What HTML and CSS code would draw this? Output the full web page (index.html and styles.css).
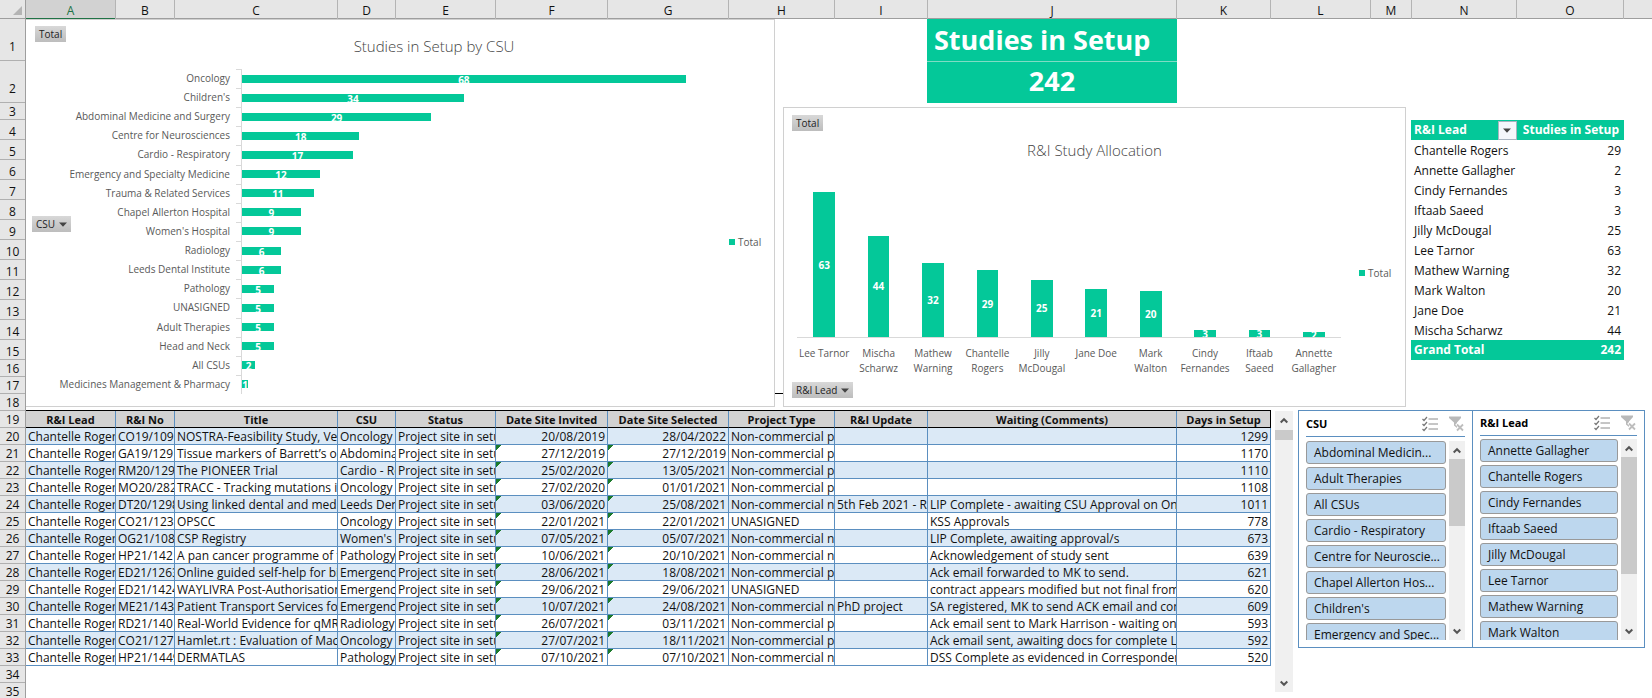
FILE: index.html
```html
<!DOCTYPE html>
<html lang="en">
<head>
<meta charset="utf-8">
<meta name="viewport" content="width=device-width, initial-scale=1">
<title>Studies in Setup</title>
<link rel="stylesheet" href="styles.css">
</head>
<body>
<svg class="defs" aria-hidden="true">
  <symbol id="multi" viewBox="0 0 16 15"><path d="M6.500 2.500H16M6.500 7.500H16M6.500 12.500H16" stroke="#8c8c8c" fill="none"/><path d="M.5 2.500l1.500 1.500L5 .5M.5 7.500L2 9l3-3.500M.5 12.500L2 14l3-3.500" stroke="#777" stroke-width="1.200" fill="none"/></symbol>
  <symbol id="clear" viewBox="0 0 16 16"><path d="M0 .5h12v1.500L8 6.500V12l-3-2.500v-3L0 2z" fill="#b9b9b9"/><path d="M7.500 7.500l7 7M14.500 7.500l-7 7" stroke="#fff" stroke-width="3.500"/><path d="M8 8.500l6 6M14 8.500l-6 6" stroke="#bdbdbd" stroke-width="1.800"/></symbol>
  <symbol id="up" viewBox="0 0 8 7"><path d="M.7 5.500L4 2.200l3.300 3.300" fill="none" stroke="#555" stroke-width="2"/></symbol>
  <symbol id="down" viewBox="0 0 8 7"><path d="M.7 1.500L4 4.800l3.300-3.300" fill="none" stroke="#555" stroke-width="2"/></symbol>
  <symbol id="tri" viewBox="0 0 8 5"><path d="M0 .5h8L4 4.800z" fill="#444"/></symbol>
</svg>

<div class="book">
  <div class="colheads">
    <span class="corner"><svg class="corner-mark" viewBox="0 0 9 9"><path d="M9 0v9H0z" fill="#b4b4b4"/></svg></span>
    <span class="sel">A</span><span>B</span><span>C</span><span>D</span><span>E</span><span>F</span><span>G</span><span>H</span><span>I</span><span>J</span><span>K</span><span>L</span><span>M</span><span>N</span><span>O</span><span class="rest"></span>
  </div>

  <div class="rownums">
    <span class="tall">1</span><span class="tall">2</span><span>3</span><span class="mid">4</span><span class="mid">5</span><span class="mid">6</span><span class="mid">7</span><span class="mid">8</span><span class="mid">9</span><span class="mid">10</span><span class="mid">11</span><span class="mid">12</span><span class="mid">13</span><span class="mid">14</span><span class="mid">15</span><span>16</span><span>17</span><span>18</span><span>19</span><span>20</span><span>21</span><span>22</span><span>23</span><span>24</span><span>25</span><span>26</span><span>27</span><span>28</span><span>29</span><span>30</span><span>31</span><span>32</span><span>33</span><span>34</span><span>35</span>
  </div>

  <main class="sheet">
    <div class="top">
      <section class="chart csu">
        <button class="field f-total">Total</button>
        <h2>Studies in Setup by CSU</h2>
        <div class="hplot">
          <ul class="hbars">
            <li><span class="name">Oncology</span><span class="track"><b style="width:97.1%">68</b></span></li>
            <li><span class="name">Children's</span><span class="track"><b style="width:48.6%">34</b></span></li>
            <li><span class="name">Abdominal Medicine and Surgery</span><span class="track"><b style="width:41.4%">29</b></span></li>
            <li><span class="name">Centre for Neurosciences</span><span class="track"><b style="width:25.7%">18</b></span></li>
            <li><span class="name">Cardio - Respiratory</span><span class="track"><b style="width:24.3%">17</b></span></li>
            <li><span class="name">Emergency and Specialty Medicine</span><span class="track"><b style="width:17.1%">12</b></span></li>
            <li><span class="name">Trauma &amp; Related Services</span><span class="track"><b style="width:15.7%">11</b></span></li>
            <li><span class="name">Chapel Allerton Hospital</span><span class="track"><b style="width:12.9%">9</b></span></li>
            <li><span class="name">Women's Hospital</span><span class="track"><b style="width:12.9%">9</b></span></li>
            <li><span class="name">Radiology</span><span class="track"><b style="width:8.6%">6</b></span></li>
            <li><span class="name">Leeds Dental Institute</span><span class="track"><b style="width:8.6%">6</b></span></li>
            <li><span class="name">Pathology</span><span class="track"><b style="width:7.1%">5</b></span></li>
            <li><span class="name">UNASIGNED</span><span class="track"><b style="width:7.1%">5</b></span></li>
            <li><span class="name">Adult Therapies</span><span class="track"><b style="width:7.1%">5</b></span></li>
            <li><span class="name">Head and Neck</span><span class="track"><b style="width:7.1%">5</b></span></li>
            <li><span class="name">All CSUs</span><span class="track"><b style="width:2.9%">2</b></span></li>
            <li><span class="name">Medicines Management &amp; Pharmacy</span><span class="track"><b style="width:1.4%">1</b></span></li>
          </ul>
          <div class="legend">Total</div>
        </div>
        <button class="field f-csu">CSU <svg class="tri"><use href="#tri"/></svg></button>
      </section>

      <div class="seam"></div>

      <div class="kpi"><strong>Studies in Setup</strong><strong class="num">242</strong></div>

      <section class="chart alloc">
        <button class="field f-total">Total</button>
        <h2>R&amp;I Study Allocation</h2>
        <div class="vplot">
          <ul class="vbars">
            <li><span class="col"><b style="height:90%">63</b></span><span class="name">Lee Tarnor</span></li>
            <li><span class="col"><b style="height:62.9%">44</b></span><span class="name">Mischa Scharwz</span></li>
            <li><span class="col"><b style="height:45.7%">32</b></span><span class="name">Mathew Warning</span></li>
            <li><span class="col"><b style="height:41.4%">29</b></span><span class="name">Chantelle Rogers</span></li>
            <li><span class="col"><b style="height:35.7%">25</b></span><span class="name">Jilly McDougal</span></li>
            <li><span class="col"><b style="height:30%">21</b></span><span class="name">Jane Doe</span></li>
            <li><span class="col"><b style="height:28.6%">20</b></span><span class="name">Mark Walton</span></li>
            <li><span class="col"><b style="height:4.3%">3</b></span><span class="name">Cindy Fernandes</span></li>
            <li><span class="col"><b style="height:4.3%">3</b></span><span class="name">Iftaab Saeed</span></li>
            <li><span class="col"><b style="height:2.9%">2</b></span><span class="name">Annette Gallagher</span></li>
          </ul>
          <div class="legend">Total</div>
        </div>
        <button class="field f-lead">R&amp;I Lead <svg class="tri"><use href="#tri"/></svg></button>
      </section>

      <table class="pivot">
        <thead><tr><th><span class="pv-head">R&amp;I Lead<button class="drop" aria-label="Filter R&amp;I Lead"><svg class="tri"><use href="#tri"/></svg></button></span></th><th class="n">Studies in Setup</th></tr></thead>
        <tbody>
          <tr><td>Chantelle Rogers</td><td class="n">29</td></tr>
          <tr><td>Annette Gallagher</td><td class="n">2</td></tr>
          <tr><td>Cindy Fernandes</td><td class="n">3</td></tr>
          <tr><td>Iftaab Saeed</td><td class="n">3</td></tr>
          <tr><td>Jilly McDougal</td><td class="n">25</td></tr>
          <tr><td>Lee Tarnor</td><td class="n">63</td></tr>
          <tr><td>Mathew Warning</td><td class="n">32</td></tr>
          <tr><td>Mark Walton</td><td class="n">20</td></tr>
          <tr><td>Jane Doe</td><td class="n">21</td></tr>
          <tr><td>Mischa Scharwz</td><td class="n">44</td></tr>
        </tbody>
        <tfoot><tr><th>Grand Total</th><th class="n">242</th></tr></tfoot>
      </table>
    </div>

    <div class="bottom">
      <table class="data">
        <colgroup><col class="wa"><col class="wb"><col class="wc"><col class="wd"><col class="we"><col class="wf"><col class="wg"><col class="wh"><col class="wi"><col class="wj"><col class="wk"></colgroup>
        <thead><tr><th>R&amp;I Lead</th><th>R&amp;I No</th><th>Title</th><th>CSU</th><th>Status</th><th>Date Site Invited</th><th>Date Site Selected</th><th>Project Type</th><th>R&amp;I Update</th><th>Waiting (Comments)</th><th>Days in Setup</th></tr></thead>
        <tbody>
          <tr><td>Chantelle Rogers</td><td>CO19/109</td><td>NOSTRA-Feasibility Study, Ver</td><td>Oncology</td><td>Project site in setup</td><td class="n">20/08/2019</td><td class="n">28/04/2022</td><td>Non-commercial po</td><td></td><td></td><td class="n">1299</td></tr>
          <tr><td>Chantelle Rogers</td><td>GA19/129</td><td>Tissue markers of Barrett’s oe</td><td>Abdomina</td><td>Project site in setup</td><td class="n flag">27/12/2019</td><td class="n flag">27/12/2019</td><td>Non-commercial po</td><td></td><td></td><td class="n">1170</td></tr>
          <tr><td>Chantelle Rogers</td><td>RM20/129</td><td>The PIONEER Trial</td><td>Cardio - Re</td><td>Project site in setup</td><td class="n flag">25/02/2020</td><td class="n flag">13/05/2021</td><td>Non-commercial po</td><td></td><td></td><td class="n">1110</td></tr>
          <tr><td>Chantelle Rogers</td><td>MO20/282</td><td>TRACC - Tracking mutations in</td><td>Oncology</td><td>Project site in setup</td><td class="n flag">27/02/2020</td><td class="n flag">01/01/2021</td><td>Non-commercial po</td><td></td><td></td><td class="n">1108</td></tr>
          <tr><td>Chantelle Rogers</td><td>DT20/1298</td><td>Using linked dental and medi</td><td>Leeds Dent</td><td>Project site in setup</td><td class="n flag">03/06/2020</td><td class="n flag">25/08/2021</td><td>Non-commercial no</td><td>5th Feb 2021 - Re</td><td>LIP Complete - awaiting CSU Approval on One</td><td class="n">1011</td></tr>
          <tr><td>Chantelle Rogers</td><td>CO21/123</td><td>OPSCC</td><td>Oncology</td><td>Project site in setup</td><td class="n flag">22/01/2021</td><td class="n flag">22/01/2021</td><td>UNASIGNED</td><td></td><td>KSS Approvals</td><td class="n">778</td></tr>
          <tr><td>Chantelle Rogers</td><td>OG21/108</td><td>CSP Registry</td><td>Women's</td><td>Project site in setup</td><td class="n flag">07/05/2021</td><td class="n flag">05/07/2021</td><td>Non-commercial no</td><td></td><td>LIP Complete, awaiting approval/s</td><td class="n">673</td></tr>
          <tr><td>Chantelle Rogers</td><td>HP21/142</td><td>A pan cancer programme of tu</td><td>Pathology</td><td>Project site in setup</td><td class="n flag">10/06/2021</td><td class="n flag">20/10/2021</td><td>Non-commercial no</td><td></td><td>Acknowledgement of study sent</td><td class="n">639</td></tr>
          <tr><td>Chantelle Rogers</td><td>ED21/1263</td><td>Online guided self-help for bi</td><td>Emergency</td><td>Project site in setup</td><td class="n flag">28/06/2021</td><td class="n flag">18/08/2021</td><td>Non-commercial po</td><td></td><td>Ack email forwarded to MK to send.</td><td class="n">621</td></tr>
          <tr><td>Chantelle Rogers</td><td>ED21/1424</td><td>WAYLIVRA Post-Authorisation</td><td>Emergency</td><td>Project site in setup</td><td class="n flag">29/06/2021</td><td class="n flag">29/06/2021</td><td>UNASIGNED</td><td></td><td>contract appears modified but not final from</td><td class="n">620</td></tr>
          <tr><td>Chantelle Rogers</td><td>ME21/143</td><td>Patient Transport Services for</td><td>Emergency</td><td>Project site in setup</td><td class="n flag">10/07/2021</td><td class="n flag">24/08/2021</td><td>Non-commercial no</td><td>PhD project</td><td>SA registered, MK to send ACK email and cond</td><td class="n">609</td></tr>
          <tr><td>Chantelle Rogers</td><td>RD21/140</td><td>Real-World Evidence for qMR</td><td>Radiology</td><td>Project site in setup</td><td class="n flag">26/07/2021</td><td class="n flag">03/11/2021</td><td>Non-commercial po</td><td></td><td>Ack email sent to Mark Harrison - waiting on</td><td class="n">593</td></tr>
          <tr><td>Chantelle Rogers</td><td>CO21/127</td><td>Hamlet.rt : Evaluation of Mac</td><td>Oncology</td><td>Project site in setup</td><td class="n flag">27/07/2021</td><td class="n flag">18/11/2021</td><td>Non-commercial po</td><td></td><td>Ack email sent, awaiting docs for complete LI</td><td class="n">592</td></tr>
          <tr><td>Chantelle Rogers</td><td>HP21/1449</td><td>DERMATLAS</td><td>Pathology</td><td>Project site in setup</td><td class="n flag">07/10/2021</td><td class="n flag">07/10/2021</td><td>Non-commercial no</td><td></td><td>DSS Complete as evidenced in Correspondenc</td><td class="n">520</td></tr>
        </tbody>
      </table>

      <div class="scroll main-scroll"><button aria-label="Scroll up"><svg><use href="#up"/></svg></button><i class="thumb t-main"></i><button class="end" aria-label="Scroll down"><svg><use href="#down"/></svg></button></div>

      <div class="slicers">
        <section class="slicer">
          <header><h3>CSU</h3><button class="tool" aria-label="Multi-select"><svg><use href="#multi"/></svg></button><button class="tool" aria-label="Clear filter"><svg><use href="#clear"/></svg></button></header>
          <div class="items">
            <div class="list"><button>Abdominal Medicin...</button><button>Adult Therapies</button><button>All CSUs</button><button>Cardio - Respiratory</button><button>Centre for Neuroscie...</button><button>Chapel Allerton Hos...</button><button>Children's</button><button>Emergency and Spec...</button></div>
            <div class="scroll"><button aria-label="Scroll up"><svg><use href="#up"/></svg></button><i class="thumb t-csu"></i><button class="end" aria-label="Scroll down"><svg><use href="#down"/></svg></button></div>
          </div>
        </section>
        <section class="slicer second">
          <header><h3>R&amp;I Lead</h3><button class="tool" aria-label="Multi-select"><svg><use href="#multi"/></svg></button><button class="tool" aria-label="Clear filter"><svg><use href="#clear"/></svg></button></header>
          <div class="items">
            <div class="list"><button>Annette Gallagher</button><button>Chantelle Rogers</button><button>Cindy Fernandes</button><button>Iftaab Saeed</button><button>Jilly McDougal</button><button>Lee Tarnor</button><button>Mathew Warning</button><button>Mark Walton</button></div>
            <div class="scroll"><button aria-label="Scroll up"><svg><use href="#up"/></svg></button><i class="thumb t-lead"></i><button class="end" aria-label="Scroll down"><svg><use href="#down"/></svg></button></div>
          </div>
        </section>
      </div>
    </div>
  </main>
</div>
</body>
</html>
```
FILE: styles.css
```css
:root {
  --green: #04c899;
  --line: #5b8fc0;
  --grid: #9e9e9e;
}
* { box-sizing: border-box; }
body {
  margin: 0;
  height: 100vh;
  overflow: hidden;
  background: #fff;
  color: #111;
  font: 12px/16px "Open Sans", "Noto Sans", sans-serif;
}
button { font: inherit; color: inherit; border: 0; padding: 0; background: none; }
ul { list-style: none; margin: 0; padding: 0; }
h2, h3 { margin: 0; }
.defs { position: absolute; width: 0; height: 0; }

.book { display: grid; grid-template-columns: 26px minmax(0, 1fr); }

/* column letters */
.colheads {
  grid-column: 1 / -1;
  display: grid;
  grid-template-columns: 26px 90fr 59fr 163fr 58fr 100fr 112fr 121fr 106fr 93fr 249fr 94fr 100fr 41fr 105fr 107fr 28fr;
  height: 19px;
  background: #e6e6e6;
  border-bottom: 1px solid var(--grid);
}
.colheads span {
  border-right: 1px solid #b4b4b4;
  text-align: center;
  padding-top: 3px;
  line-height: 16px;
}
.colheads .rest { border: 0; }
.colheads .corner { border-right-color: var(--grid); padding: 6px 3px 0 0; text-align: right; line-height: 0; }
.corner-mark { width: 9px; height: 9px; }
.colheads .sel { background: #d2d2d2; color: #217346; box-shadow: inset 0 -1px #217346, 0 1px #217346; }

/* row numbers */
.rownums { background: #e6e6e6; border-right: 1px solid var(--grid); }
.rownums span {
  display: flex;
  align-items: flex-end;
  justify-content: center;
  height: 17px;
  line-height: 14px;
  border-bottom: 1px solid #b0b0b0;
}
.rownums .mid { height: 20px; }
.rownums .tall { height: 42px; padding-bottom: 6px; }

/* upper half: charts, headline figure, pivot */
.top {
  display: grid;
  grid-template-columns: 749fr 8fr 144fr 250fr 229fr 5fr 213fr 28fr;
  grid-template-rows: 84px 4px 300px 3px;
}
.chart { position: relative; border: 1px solid #d0d0d0; background: #fff; color: #595959; display: flex; flex-direction: column; }
.chart h2 { font-size: 15px; line-height: 20px; font-weight: 300; text-align: center; color: #444; }
.csu { grid-column: 1; grid-row: 1 / 4; border-left: 0; }
.seam { grid-column: 2; grid-row: 1 / 4; height: 375px; border-bottom: 1px solid #000; }
.kpi { grid-column: 4; grid-row: 1; background: var(--green); color: #fff; font-size: 27px; line-height: 36px; display: grid; grid-template-rows: 1fr 1fr; }
.kpi strong { display: flex; align-items: center; padding-left: 7px; white-space: nowrap; }
.kpi .num { border-top: 1px solid #7fdcc4; justify-content: center; padding: 0 0 3px; }
.alloc { grid-column: 3 / 6; grid-row: 3; }

.field {
  position: absolute;
  height: 16px;
  padding: 0 4px;
  font-size: 10px;
  line-height: 15px;
  color: #222;
  background: linear-gradient(#d8d8d8, #bdbdbd);
  display: flex;
  align-items: center;
  gap: 4px;
}
.tri { width: 8px; height: 5px; }
.csu .f-total { left: 9px; top: 6px; }
.f-csu { left: 6px; top: 196px; }
.alloc .f-total { left: 8px; top: 7px; }
.f-lead { left: 8px; bottom: 8px; }

.legend { font-size: 10px; line-height: 12px; display: flex; align-items: center; gap: 3px; }
.legend::before { content: ""; width: 6px; height: 6px; background: var(--green); }

.csu h2 { padding: 16px 0 13px 68px; }
.hplot { display: grid; grid-template-columns: 673fr 30fr 45fr; }
.hplot .legend { grid-column: 3; padding-top: 20px; }
.hbars { display: grid; grid-template-rows: repeat(17, 1fr); height: 325px; }
.hbars li { display: grid; grid-template-columns: 216fr 457fr; }
.hbars .name { font-size: 10px; line-height: 19px; text-align: right; padding-right: 11px; white-space: nowrap; border-right: 1px solid #d9d9d9; }
.track { display: flex; align-items: center; position: relative; }
.track::before { content: ""; position: absolute; left: -6px; top: 0; width: 5px; height: 1px; background: #d9d9d9; }
.track b { height: 8px; background: var(--green); color: #fff; font-size: 10px; line-height: 10px; text-align: center; overflow: hidden; }

.alloc h2 { padding: 32px 0 0; }
.vplot { display: grid; grid-template-columns: 13fr 545fr 18fr 46fr; padding-top: 16px; }
.vbars { grid-column: 2; display: grid; grid-template-columns: repeat(10, 1fr); }
.vplot .legend { grid-column: 4; height: 12px; margin-top: 91px; }
.vbars li { display: flex; flex-direction: column; }
.col { height: 162px; border-bottom: 1px solid #d9d9d9; display: flex; align-items: flex-end; justify-content: center; }
.col b { width: 40%; background: var(--green); color: #fff; font-size: 10px; line-height: 12px; display: flex; align-items: center; justify-content: center; overflow: hidden; }
.vbars .name { font-size: 10px; line-height: 15px; text-align: center; padding-top: 8px; }

.pivot { grid-column: 7; grid-row: 3; margin-top: 13px; align-self: start; width: 100%; table-layout: fixed; border-spacing: 0; }
.pivot td, .pivot th { height: 20px; padding: 0 3px; line-height: 20px; text-align: left; white-space: nowrap; overflow: hidden; }
.pivot td { padding-top: 2px; line-height: 18px; }
.pivot th { background: var(--green); color: #fff; }
.pivot .n { text-align: right; }
.pivot thead .n { padding: 0 5px 0 0; }
.pv-head { display: flex; align-items: center; justify-content: space-between; }
.pivot thead th:first-child { padding-right: 1px; }
.drop { width: 19px; height: 19px; background: #f4f7fb; border: 1px solid #a8b4c0; display: flex; align-items: center; justify-content: center; }

/* lower half: register, scroll bar, slicers */
.bottom { display: grid; grid-template-columns: 1245fr 4fr 18fr 5fr 347fr 7fr; align-items: start; }
.data { width: 100%; table-layout: fixed; border-spacing: 0; border-top: 1px solid #000; }
.wa { width: 90px; } .wb { width: 59px; } .wc { width: 163px; } .wd { width: 58px; }
.we { width: 100px; } .wf { width: 112px; } .wg { width: 121px; } .wh { width: 106px; }
.wi { width: 93px; } .wj { width: 249px; } .wk { width: 94px; }
.data th, .data td {
  height: 17px;
  padding: 2px 2px 0;
  line-height: 14px;
  white-space: nowrap;
  overflow: hidden;
  border-right: 1px solid var(--line);
  border-bottom: 1px solid var(--line);
}
.data th { font-size: 11px; background: #d2d2d2; border-bottom-color: #000; }
.data th:last-child { border-right-color: #000; }
.data tbody tr:nth-child(odd) { background: #dbe9f6; }
.data .n { text-align: right; }
.flag { background: linear-gradient(135deg, #1c7a2c 4px, transparent 4px); }

.scroll { background: #f0f0f0; display: flex; flex-direction: column; align-items: stretch; }
.scroll button { height: 18px; flex: none; display: flex; align-items: center; justify-content: center; }
.scroll svg { width: 8px; height: 7px; }
.scroll .end { margin-top: auto; }
.thumb { background: #cacaca; flex: none; }
.main-scroll { grid-column: 3; height: 281px; margin-top: 1px; }
.t-main { height: 10px; margin-top: 1px; }
.t-csu { height: 67px; }
.t-lead { height: 117px; }

.slicers { grid-column: 5; display: grid; grid-template-columns: 173fr 172fr; height: 238px; border: 1px solid var(--line); background: #fff; }
.slicer { padding: 0 7px 7px; display: flex; flex-direction: column; min-height: 0; min-width: 0; }
.second { border-left: 1px solid var(--line); }
.slicer header { display: flex; align-items: center; height: 26px; border-bottom: 1px solid var(--line); gap: 11px; }
.second header { height: 25px; }
.slicer h3 { font-size: 11px; line-height: 16px; margin-right: auto; color: #000; }
.tool { width: 16px; height: 16px; }
.tool svg { width: 16px; height: 16px; display: block; }
.items { display: flex; gap: 3px; padding-top: 4px; flex: 1; min-height: 0; }
.second .items { padding-top: 3px; }
.list { flex: 1; display: flex; flex-direction: column; gap: 3px; overflow: hidden; min-width: 0; }
.list button { height: 23px; flex: none; text-align: left; padding: 0 7px; white-space: nowrap; background: #bdd7ee; border: 1px solid #999; border-radius: 3px; }
.items .scroll { width: 16px; }
```
